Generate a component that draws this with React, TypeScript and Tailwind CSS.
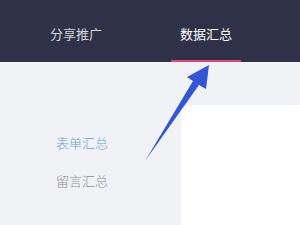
export default function App() {
  const tabs = [
    { label: "分享推广", active: false },
    { label: "数据汇总", active: true },
  ];
  const menu = [
    { label: "表单汇总", active: true },
    { label: "留言汇总", active: false },
  ];

  return (
    <div
      className="relative w-[300px] h-[225px] overflow-hidden bg-[#f0f2f5]"
      style={{ fontFamily: '"Noto Sans CJK SC", "Noto Sans", sans-serif' }}
    >
      <div className="h-[62px] bg-[#2e3148] flex items-stretch pl-[41px] gap-[60px]">
        {tabs.map((t) => (
          <div key={t.label} className="relative w-[70px] flex items-center justify-center pt-[6px]">
            <span className={`text-[13px] ${t.active ? "text-white" : "text-[#d2d4dc]"}`}>{t.label}</span>
            {t.active && <div className="absolute left-0 right-0 bottom-0 h-[2px] bg-[#e0457b]" />}
          </div>
        ))}
      </div>
      <div className="flex h-[163px]">
        <div className="w-[181px] pt-[62px] pl-[56px]">
          {menu.map((m) => (
            <div
              key={m.label}
              className={`h-[38px] leading-[38px] text-[13px] font-light ${m.active ? "text-[#6c9fd9]" : "text-[#8c8c8c]"}`}
            >
              {m.label}
            </div>
          ))}
        </div>
        <div className="flex-1 mt-[43px] bg-white" />
      </div>
      <svg className="absolute left-0 top-0" width="300" height="225" viewBox="0 0 300 225">
        <polygon points="209,65 206,89 199,85 145,161 193,81 187,77" fill="#3456d6" />
      </svg>
    </div>
  );
}
